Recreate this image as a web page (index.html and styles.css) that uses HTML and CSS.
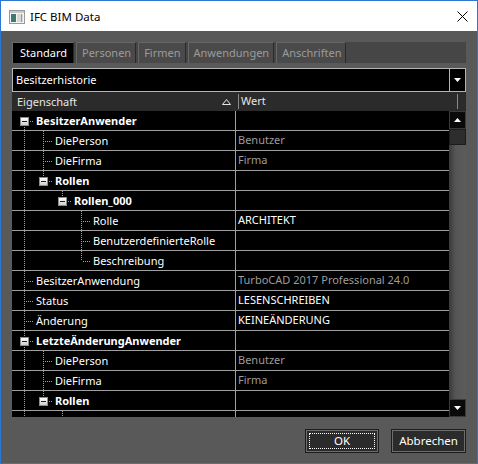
FILE: index.html
```html
<!DOCTYPE html>
<html>
<head>
<meta charset="utf-8">
<link rel="stylesheet" href="styles.css">
</head>
<body>
<div class="window">
  <div class="titlebar">
    <svg class="appicon" width="16" height="14" viewBox="0 0 16 14">
      <rect x="0.5" y="0.5" width="15" height="13" fill="#f4f4f4" stroke="#9a9a9a"/>
      <rect x="1" y="1" width="14" height="2" fill="#c8c8c8"/>
      <rect x="2" y="4" width="5" height="8" fill="#3d7a70"/>
      <rect x="8" y="4" width="6" height="8" fill="#d8d8d8"/>
      <rect x="12" y="4" width="1" height="8" fill="#9a9a9a"/>
    </svg>
    <span class="title">IFC BIM Data</span>
    <svg class="close" width="11" height="11" viewBox="0 0 11 11">
      <path d="M0.5 0.5 L10.5 10.5 M10.5 0.5 L0.5 10.5" stroke="#000" stroke-width="1"/>
    </svg>
  </div>
  <div class="body">
    <div class="tabs">
      <div class="tab active">Standard</div>
      <div class="tab">Personen</div>
      <div class="tab">Firmen</div>
      <div class="tab">Anwendungen</div>
      <div class="tab">Anschriften</div>
    </div>
    <div class="combo">
      <div class="combo-text">Besitzerhistorie</div>
      <div class="combo-btn">
        <svg width="7" height="4" viewBox="0 0 7 4"><path d="M0 0 H7 L3.5 4 Z" fill="#fff"/></svg>
      </div>
    </div>
    <div class="grid">
      <div class="header">
        <div class="hcell hname">
          <span>Eigenschaft</span>
          <svg class="sort" width="9" height="6" viewBox="0 0 9 6"><path d="M4.5 0.5 L8.5 5.5 H0.5 Z" fill="none" stroke="#e6e6e6" stroke-width="1"/></svg>
        </div>
        <div class="hcell hval">Wert</div>
        <div class="hcell hend"></div>
      </div>
      <div class="content">
        <div class="rows">
          <div class="row"><div class="name"><span class="g f"><span class="box"></span></span><span class="lbl b">BesitzerAnwender</span></div><div class="val"></div></div>
          <div class="row"><div class="name"><span class="g v"></span><span class="g t"></span><span class="lbl">DiePerson</span></div><div class="val dim">Benutzer</div></div>
          <div class="row"><div class="name"><span class="g v"></span><span class="g t"></span><span class="lbl">DieFirma</span></div><div class="val dim">Firma</div></div>
          <div class="row"><div class="name"><span class="g v"></span><span class="g l"><span class="box"></span></span><span class="lbl b">Rollen</span></div><div class="val"></div></div>
          <div class="row"><div class="name"><span class="g v"></span><span class="g"></span><span class="g l"><span class="box"></span></span><span class="lbl b">Rollen_000</span></div><div class="val"></div></div>
          <div class="row"><div class="name"><span class="g v"></span><span class="g"></span><span class="g"></span><span class="g t"></span><span class="lbl">Rolle</span></div><div class="val">ARCHITEKT</div></div>
          <div class="row"><div class="name"><span class="g v"></span><span class="g"></span><span class="g"></span><span class="g t"></span><span class="lbl">BenutzerdefinierteRolle</span></div><div class="val"></div></div>
          <div class="row"><div class="name"><span class="g v"></span><span class="g"></span><span class="g"></span><span class="g l"></span><span class="lbl">Beschreibung</span></div><div class="val"></div></div>
          <div class="row"><div class="name"><span class="g t"></span><span class="lbl">BesitzerAnwendung</span></div><div class="val dim">TurboCAD 2017 Professional 24.0</div></div>
          <div class="row"><div class="name"><span class="g t"></span><span class="lbl">Status</span></div><div class="val">LESENSCHREIBEN</div></div>
          <div class="row"><div class="name"><span class="g t"></span><span class="lbl">Änderung</span></div><div class="val">KEINEÄNDERUNG</div></div>
          <div class="row"><div class="name"><span class="g t"><span class="box"></span></span><span class="lbl b">LetzteÄnderungAnwender</span></div><div class="val"></div></div>
          <div class="row"><div class="name"><span class="g v"></span><span class="g t"></span><span class="lbl">DiePerson</span></div><div class="val dim">Benutzer</div></div>
          <div class="row"><div class="name"><span class="g v"></span><span class="g t"></span><span class="lbl">DieFirma</span></div><div class="val dim">Firma</div></div>
          <div class="row"><div class="name"><span class="g v"></span><span class="g l"><span class="box"></span></span><span class="lbl b">Rollen</span></div><div class="val"></div></div>
          <div class="row"><div class="name"><span class="g v"></span><span class="g"></span><span class="g l"><span class="box"></span></span><span class="lbl b">Rollen_000</span></div><div class="val"></div></div>
        </div>
        <div class="vscroll">
          <div class="sbtn"><svg width="7" height="4" viewBox="0 0 7 4"><path d="M3.5 0 L7 4 H0 Z" fill="#fff"/></svg></div>
          <div class="thumb"></div>
          <div class="track"></div>
          <div class="sbtn"><svg width="7" height="4" viewBox="0 0 7 4"><path d="M0 0 H7 L3.5 4 Z" fill="#fff"/></svg></div>
        </div>
      </div>
    </div>
    <div class="buttons">
      <div class="btn ok"><span class="focus">OK</span></div>
      <div class="btn cancel">Abbrechen</div>
    </div>
  </div>
</div>
</body>
</html>
```

FILE: styles.css
```css
* { box-sizing: border-box; }
html, body { margin: 0; padding: 0; }
body {
  width: 478px;
  height: 464px;
  overflow: hidden;
  font-family: "Noto Sans", "DejaVu Sans", sans-serif;
  font-size: 11px;
  background: #595959;
}
.window {
  width: 478px;
  height: 464px;
  border: 1px solid #2b78d3;
  display: flex;
  flex-direction: column;
  background: #595959;
}
.titlebar {
  height: 30px;
  flex: none;
  background: #fff;
  display: flex;
  align-items: center;
  padding-left: 8px;
}
.appicon { display: block; margin-top: 1px; }
.title { margin-left: 5px; color: #000; font-size: 11.5px; }
.close { margin-left: auto; margin-right: 9px; display: block; }

.body {
  flex: 1;
  padding: 11px 11px 0 11px;
  display: flex;
  flex-direction: column;
}

/* tabs */
.tabs {
  height: 21px;
  flex: none;
  background: #464646;
  display: flex;
  align-items: stretch;
}
.tab {
  padding: 0 4px 0 5px;
  margin-right: 2px;
  color: #9c9c9c;
  background: #4a4a4a;
  border-top: 1px solid #666;
  border-left: 1px solid #666;
  border-right: 1px solid #2a2a2a;
  line-height: 19px;
  white-space: nowrap;
}
.tab.active {
  background: #000;
  color: #fff;
  padding: 0 6px 0 7px;
  border-top: 1px solid #6a6a6a;
  border-left: 1px solid #6a6a6a;
  border-right: 1px solid #2a2a2a;
}

/* combo */
.combo {
  margin-top: 5px;
  height: 24px;
  flex: none;
  display: flex;
  background: #000;
  border: 1px solid #b4b4b4;
}
.combo-text {
  flex: 1;
  color: #fff;
  padding-left: 3px;
  line-height: 21px;
}
.combo-btn {
  width: 16px;
  border-left: 1px solid #b4b4b4;
  display: flex;
  align-items: center;
  justify-content: center;
}
.combo-btn svg { display: block; }

/* grid */
.grid {
  height: 325px;
  flex: none;
  display: flex;
  flex-direction: column;
  overflow: hidden;
}
.header {
  height: 19px;
  flex: none;
  display: flex;
  background: #2b2b2b;
  color: #e6e6e6;
}
.hcell { white-space: nowrap; }
.hname {
  width: 227px;
  padding-left: 5px;
  display: flex;
  align-items: center;
  border-right: 1px solid #8a8a8a;
  margin: 2px 0;
  line-height: 14px;
}
.hname span { flex: 1; }
.sort { display: block; margin-right: 7px; }
.hval {
  width: 219px;
  padding-left: 2px;
  border-right: 1px solid #8a8a8a;
  margin: 2px 0;
  line-height: 14px;
}
.hend { flex: 1; }

.content {
  flex: 1;
  display: flex;
  min-height: 0;
}
.rows {
  width: 437px;
  background: #000;
  overflow: hidden;
}
.row {
  height: 20px;
  display: flex;
  border-bottom: 1px solid #a0a0a0;
}
.name {
  width: 224px;
  flex: none;
  display: flex;
  padding-left: 3px;
  border-right: 1px solid #a0a0a0;
  white-space: nowrap;
}
.val {
  flex: 1;
  padding-left: 2px;
  color: #fff;
  line-height: 18px;
  white-space: nowrap;
}
.val.dim { color: #9c9c9c; }
.lbl {
  margin-left: 2px;
  color: #fff;
  line-height: 20px;
}
.lbl.b { font-weight: bold; }

/* tree guides */
.g {
  width: 19px;
  height: 19px;
  flex: none;
  background-repeat: no-repeat;
}
.v {
  background-image: repeating-linear-gradient(#a0a0a0 0 1px, transparent 1px 2px);
  background-size: 1px 19px;
  background-position: 9px 0;
}
.t {
  background-image:
    repeating-linear-gradient(#a0a0a0 0 1px, transparent 1px 2px),
    repeating-linear-gradient(90deg, #a0a0a0 0 1px, transparent 1px 2px);
  background-size: 1px 19px, 8px 1px;
  background-position: 9px 0, 11px 10px;
}
.l {
  background-image:
    repeating-linear-gradient(#a0a0a0 0 1px, transparent 1px 2px),
    repeating-linear-gradient(90deg, #a0a0a0 0 1px, transparent 1px 2px);
  background-size: 1px 10px, 8px 1px;
  background-position: 9px 0, 11px 10px;
}
.f {
  background-image:
    repeating-linear-gradient(#a0a0a0 0 1px, transparent 1px 2px),
    repeating-linear-gradient(90deg, #a0a0a0 0 1px, transparent 1px 2px);
  background-size: 1px 9px, 8px 1px;
  background-position: 9px 10px, 11px 10px;
}
.box {
  display: block;
  width: 9px;
  height: 9px;
  margin: 6px 0 0 5px;
  border: 1px solid #8c8c8c;
  background:
    linear-gradient(#1e1e1e, #1e1e1e) center / 5px 1px no-repeat,
    linear-gradient(#ffffff, #cfcfcf);
}

/* scrollbar */
.vscroll {
  width: 17px;
  flex: none;
  display: flex;
  flex-direction: column;
  background: linear-gradient(90deg, #3a3a3a, #565656 40%, #5c5c5c);
}
.sbtn {
  height: 18px;
  flex: none;
  background: #0a0a0a;
  border: 1px solid #3a3a3a;
  display: flex;
  align-items: center;
  justify-content: center;
}
.sbtn svg { display: block; }
.thumb {
  height: 16px;
  flex: none;
  background: #2d2d2d;
  border: 1px solid #1c1c1c;
}
.track { flex: 1; }

/* buttons */
.buttons {
  margin-top: 12px;
  display: flex;
  justify-content: flex-end;
  gap: 12px;
}
.btn {
  height: 24px;
  width: 74px;
  background: #2b2b2b;
  border: 1px solid #1c1c1c;
  box-shadow: inset 0 0 0 1px #6e6e6e;
  color: #fff;
  font-size: 11.5px;
  display: flex;
  align-items: center;
  justify-content: center;
  line-height: 16px;
}
.btn.cancel { width: 75px; }
.btn.ok { padding: 3px; }
.focus {
  flex: 1;
  align-self: stretch;
  border: 1px dotted #fff;
  text-align: center;
  line-height: 14px;
}
```
